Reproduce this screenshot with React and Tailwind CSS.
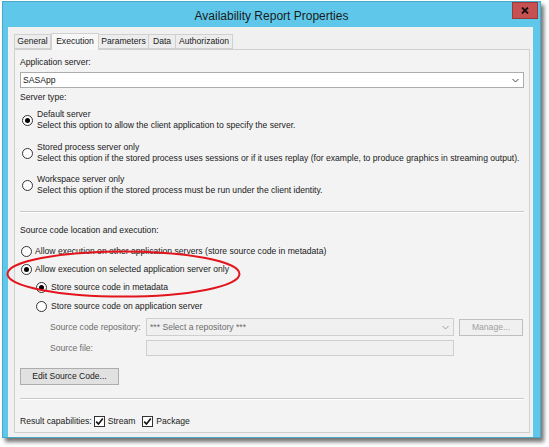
import React from 'react';

const Radio = ({ checked }) => (
  <span className="w-[11px] h-[11px] rounded-full border border-[#333333] bg-white flex items-center justify-center shrink-0">
    {checked && <span className="w-[5px] h-[5px] rounded-full bg-black" />}
  </span>
);

const Check = () => (
  <span className="w-[11px] h-[11px] border border-[#333333] bg-white flex items-center justify-center shrink-0">
    <svg width="9" height="9" viewBox="0 0 9 9">
      <path d="M1.2 4.6 L3.5 7 L7.8 1.6" fill="none" stroke="#111" strokeWidth="1.6" />
    </svg>
  </span>
);

const Chevron = ({ color = '#444' }) => (
  <svg width="7" height="5" viewBox="0 0 7 5">
    <path d="M0.5 1 L3.5 4 L6.5 1" fill="none" stroke={color} strokeWidth="1" />
  </svg>
);

const tabs = ['General', 'Execution', 'Parameters', 'Data', 'Authorization'];
const tabW = ['w-[37px]', 'w-[48px]', 'w-[51px]', 'w-[28px]', 'w-[58px]'];

export default function App() {
  return (
    <div className="w-[549px] h-[447px] bg-white relative font-['Liberation_Sans',Arial,sans-serif] text-[8.6px] text-[#1a1a1a] overflow-hidden">
      {/* window */}
      <div className="ml-[2px] mt-[1px] w-[539px] h-[437px] bg-[#5FC8EA] border border-[#4AA9C8] shadow-[3px_4px_4px_rgba(0,0,0,0.55)] flex flex-col">
        {/* title bar */}
        <div className="h-[25px] relative flex items-center justify-center shrink-0">
          <span className="text-[12px] text-[#1b1b1b] mt-[2px]">Availability Report Properties</span>
          <div className="absolute right-[2px] top-0 w-[26px] h-[17px] bg-[#C75050] border border-[#9B3B3B] flex items-center justify-center">
            <svg width="8" height="7" viewBox="0 0 8 7">
              <path d="M1 0.5 L7 6.5 M7 0.5 L1 6.5" stroke="#111" strokeWidth="1.8" />
            </svg>
          </div>
        </div>
        {/* client */}
        <div className="ml-[5px] mr-[7px] flex-1 bg-[#F0F0F0] pl-[6px] pr-[3px] pt-[5px] pb-[4px] flex flex-col">
          {/* tabs */}
          <div className="flex items-end h-[17px] relative z-10">
            {tabs.map((t, i) =>
              i === 1 ? (
                <div key={t} className={`${tabW[i]} h-[17px] -mb-px bg-[#F7F7F7] border border-b-0 border-[#D0D0D0] flex items-center justify-center pb-[2px]`}>
                  {t}
                </div>
              ) : (
                <div key={t} className={`${tabW[i]} h-[15px] bg-[#EDEDED] border border-[#D0D0D0] ${i > 0 ? '-ml-px' : ''} flex items-center justify-center`}>
                  {t}
                </div>
              )
            )}
          </div>
          {/* panel */}
          <div className="flex-1 bg-[#F3F3F3] border border-[#D0D0D0] pl-[5px] pr-[5px] flex flex-col">
            <div className="mt-[6px] h-[12px] leading-[12px]">Application server:</div>
            <div className="mt-[4px] h-[16px] bg-white border border-[#ACACAC] flex items-center justify-between pl-[2px] pr-[4px]">
              <span>SASApp</span>
              <Chevron />
            </div>
            <div className="mt-[3px] h-[12px] leading-[12px]">Server type:</div>

            <div className="mt-[6px] flex items-center pl-[2px]">
              <Radio checked />
              <div className="ml-[4px] leading-[11px]">
                <div>Default server</div>
                <div>Select this option to allow the client application to specify the server.</div>
              </div>
            </div>
            <div className="mt-[11px] flex items-center pl-[2px]">
              <Radio />
              <div className="ml-[4px] leading-[11px]">
                <div>Stored process server only</div>
                <div>Select this option if the stored process uses sessions or if it uses replay (for example, to produce graphics in streaming output).</div>
              </div>
            </div>
            <div className="mt-[10px] flex items-center pl-[2px]">
              <Radio />
              <div className="ml-[4px] leading-[11px]">
                <div>Workspace server only</div>
                <div>Select this option if the stored process must be run under the client identity.</div>
              </div>
            </div>

            <div className="mt-[15px] h-px bg-[#C8C8C8] border-b border-white box-content" />

            <div className="mt-[11px] h-[12px] leading-[12px]">Source code location and execution:</div>
            <div className="mt-[9px] h-[12px] flex items-center pl-[1px]">
              <Radio />
              <span className="ml-[3px]">Allow execution on other application servers (store source code in metadata)</span>
            </div>
            <div className="mt-[6px] h-[12px] flex items-center pl-[1px]">
              <Radio checked />
              <span className="ml-[3px]">Allow execution on selected application server only</span>
            </div>
            <div className="mt-[6px] h-[12px] flex items-center pl-[16px]">
              <Radio checked />
              <span className="ml-[4px]">Store source code in metadata</span>
            </div>
            <div className="mt-[7px] h-[12px] flex items-center pl-[16px]">
              <Radio />
              <span className="ml-[4px]">Store source code on application server</span>
            </div>

            <div className="mt-[6px] h-[18px] flex items-center pl-[30px]">
              <span className="w-[96px] text-[#6D6D6D]">Source code repository:</span>
              <div className="w-[308px] h-[18px] border border-[#CFCFCF] bg-[#F0F0F0] flex items-center justify-between pl-[3px] pr-[4px] text-[#6D6D6D]">
                <span>*** Select a repository ***</span>
                <Chevron color="#A0A0A0" />
              </div>
              <div className="ml-[5px] w-[64px] h-[17px] border border-[#BFBFBF] bg-[#F0F0F0] flex items-center justify-center text-[#A0A0A0]">
                Manage...
              </div>
            </div>
            <div className="mt-[4px] h-[16px] flex items-center pl-[30px]">
              <span className="w-[96px] text-[#6D6D6D]">Source file:</span>
              <div className="w-[308px] h-[16px] border border-[#CFCFCF] bg-[#F0F0F0]" />
            </div>

            <div className="mt-[12px] w-[99px] h-[17px] bg-[#E1E1E1] border border-[#ADADAD] flex items-center justify-center">
              Edit Source Code...
            </div>

            <div className="mt-[13px] h-px bg-[#C8C8C8] border-b border-white box-content" />

            <div className="mt-[15px] h-[12px] flex items-center">
              <span>Result capabilities:</span>
              <span className="ml-[2px]"><Check /></span>
              <span className="ml-[3px]">Stream</span>
              <span className="ml-[7px]"><Check /></span>
              <span className="ml-[3px]">Package</span>
            </div>
          </div>
        </div>
      </div>

      {/* red highlight */}
      <svg className="absolute left-[5px] top-[249px]" width="240" height="52" viewBox="0 0 240 52">
        <ellipse cx="118.5" cy="25" rx="116" ry="22.5" fill="none" stroke="#E3141C" strokeWidth="2" />
      </svg>
    </div>
  );
}
